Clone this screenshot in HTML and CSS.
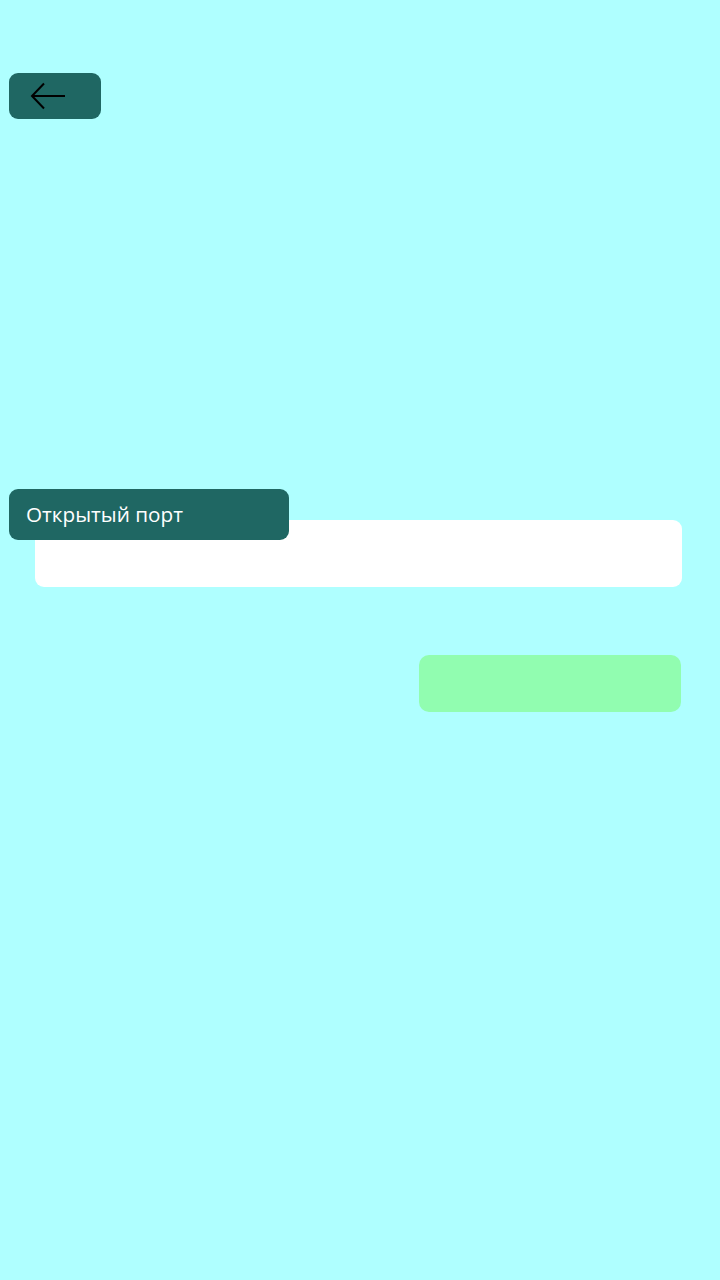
FILE: index.html
```html
<!DOCTYPE html>
<html lang="ru">
<head>
<meta charset="utf-8">
<title>Открытый порт</title>
<link rel="stylesheet" href="styles.css">
</head>
<body>
<div class="screen">
  <header class="topbar">
    <button class="back-btn" aria-label="Назад">
      <svg width="36" height="28" viewBox="0 0 36 28" fill="none" stroke="#000" stroke-width="2" stroke-linecap="butt" stroke-linejoin="miter">
        <path d="M35 14H2"/>
        <path d="M14 1.5L2 14L14 26.5"/>
      </svg>
    </button>
  </header>
  <main class="content">
    <div class="field">
      <div class="field-label">Открытый порт</div>
      <div class="field-input"></div>
    </div>
    <div class="actions">
      <button class="submit-btn"></button>
    </div>
  </main>
</div>
</body>
</html>
```
FILE: styles.css
```css
html, body {
  margin: 0;
  padding: 0;
  background: #afffff;
  font-family: "Open Sans", "Noto Sans", sans-serif;
}
.screen {
  width: 720px;
  height: 1280px;
  display: flex;
  flex-direction: column;
}
.topbar {
  padding: 73px 0 0 9px;
}
.back-btn {
  width: 92px;
  height: 46px;
  border: none;
  border-radius: 9px;
  background: #1f6763;
  padding: 0 0 0 21px;
  display: flex;
  align-items: center;
  cursor: pointer;
}
.back-btn svg {
  display: block;
}
.content {
  padding: 370px 38px 0 9px;
  display: flex;
  flex-direction: column;
}
.field {
  display: flex;
  flex-direction: column;
}
.field-label {
  position: relative;
  z-index: 1;
  width: 280px;
  height: 51px;
  box-sizing: border-box;
  background: #1f6763;
  border-radius: 9px;
  color: #fff;
  font-size: 20.7px;
  line-height: 50px;
  padding-left: 17px;
  margin-bottom: -20px;
}
.field-input {
  margin-left: 26px;
  height: 67px;
  background: #fff;
  border-radius: 9px;
}
.actions {
  display: flex;
  justify-content: flex-end;
  padding-top: 68px;
  padding-right: 1px;
}
.submit-btn {
  width: 262px;
  height: 57px;
  border: none;
  border-radius: 10px;
  background: #91fdb0;
}
```
